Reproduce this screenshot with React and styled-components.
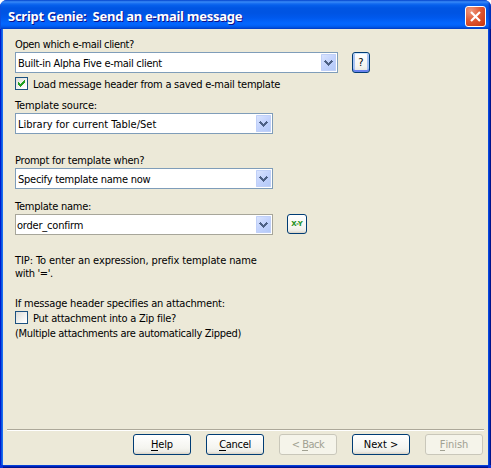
import React from 'react';
import styled, { createGlobalStyle, css } from 'styled-components';

const GlobalStyle = createGlobalStyle`
  * { box-sizing: border-box; }
  body { margin: 0; background: #fff; overflow: hidden; }
`;

const Dialog = styled.div`
  width: 491px;
  height: 468px;
  display: flex;
  flex-direction: column;
  overflow: hidden;
  border-radius: 7px 7px 0 0;
  background: #0831d9;
  font: 11px/13px 'DejaVu Sans Condensed', 'DejaVu Sans', sans-serif;
  color: #000;
`;

const TitleBar = styled.header`
  height: 29px;
  flex: none;
  display: flex;
  align-items: center;
  justify-content: space-between;
  padding: 3px 5px 0 8px;
  box-shadow: inset 1px 0 #0a4fe0, inset -2px 0 2px #0030b8;
  background: linear-gradient(
    #0a54dc 0, #3b8df8 2px, #1f74f2 3px, #0660ec 5px, #0055e3 8px,
    #0054e3 13px, #0059ee 18px, #0366fe 23px, #0264fc 25px, #0058e8 27px, #0144cb 29px
  );
`;

const Title = styled.h1`
  margin: 0;
  font: bold 13px/18px 'Noto Sans', sans-serif;
  letter-spacing: -0.26px;
  white-space: pre;
  color: #fff;
  text-shadow: 1px 1px #0f1089;
`;

const CloseButton = styled.button`
  width: 21px;
  height: 21px;
  padding: 0;
  display: grid;
  place-items: center;
  border: 1px solid #fff;
  border-radius: 3px;
  background: radial-gradient(circle at 25% 20%, #ee9a80, #e05a36 45%, #cf3d16 85%, #b93310);
`;

const Body = styled.main`
  flex: 1;
  min-height: 0;
  display: flex;
  flex-direction: column;
  margin: 0 3px 3px;
  padding-top: 9px;
  background: #ece9d8;
  box-shadow: -1px 0 #1b6bf2, -2px 0 #0855dd, -3px 0 #0019cf,
    1px 0 #0948dc, 2px 0 #0030c0, 3px 0 #00138c,
    0 1px #0441d8, 0 2px #0020b8, 0 3px #00138c;
`;

const Form = styled.div`
  flex: 1;
  display: flex;
  flex-direction: column;
  padding-left: 12px;
`;

const Label = styled.div`
  height: 13px;
  margin-top: ${(p) => p.$gap || 0}px;
  letter-spacing: ${(p) => p.$track}px;
  white-space: nowrap;
`;

const FieldRow = styled.div`
  display: flex;
  align-items: flex-start;
  gap: 14px;
  height: 21px;
  margin-top: 1px;
`;

const Combo = styled.div`
  width: ${(p) => p.$width}px;
  height: 21px;
  display: flex;
  align-items: center;
  justify-content: space-between;
  padding: 0 1px 0 ${(p) => (p.$editable ? 1 : 2)}px;
  border: 1px solid ${(p) => (p.$editable ? '#a7a69a' : '#7f9db9')};
  background: #fff;
  letter-spacing: ${(p) => p.$track}px;
  white-space: nowrap;
`;

const ComboText = styled.span`
  padding-top: 1px;
`;

const ArrowButton = styled.span`
  width: 15px;
  height: 17px;
  display: grid;
  place-items: center;
  border-radius: 1px;
  box-shadow: inset 0 0 0 1px #c0d0f8;
  background: linear-gradient(135deg, #dce6fe, #c3d3fd 50%, #b1c8f7);
`;

const CheckRow = styled.label`
  height: 13px;
  display: flex;
  gap: 5px;
  margin-top: ${(p) => p.$gap}px;
  letter-spacing: ${(p) => p.$track}px;
  white-space: nowrap;
`;

const CheckBox = styled.span`
  width: 13px;
  height: 13px;
  display: grid;
  place-items: center;
  border: 1px solid #1c5180;
  background: linear-gradient(135deg, #dcdcd7, #fff 90%);
`;

const CheckText = styled.span`
  padding-top: 1px;
`;

const frame = css`
  display: flex;
  align-items: center;
  justify-content: center;
  padding: 0;
  border: 1px solid #003c74;
  border-radius: 3px;
  font: inherit;
  color: #000;
  background: linear-gradient(#fff, #f4f4ef 70%, #ecebe5 88%, #d8d1c4);
`;

const HelpButton = styled.button`
  ${frame}
  width: 18px;
  height: 21px;
  box-shadow: inset 0 1px #cee7ff, inset 0 -2px #6982ee, inset 2px 0 #a9c4f4, inset -2px 0 #a9c4f4;
`;

const ExpressionButton = styled.button`
  ${frame}
  width: 20px;
  height: 20px;
  font: bold 7px/8px 'DejaVu Sans', sans-serif;
  letter-spacing: -0.1px;
  color: #229122;
`;

const Divider = styled.hr`
  width: 477px;
  height: 2px;
  flex: none;
  margin: 0 4px 3px;
  border: 0;
  border-top: 1px solid #aca899;
  border-bottom: 1px solid #fff;
`;

const ButtonBar = styled.footer`
  display: flex;
  justify-content: flex-end;
  gap: 15px;
  padding: 0 5px 10px 0;
`;

const PushButton = styled.button`
  ${frame}
  width: 58px;
  height: 21px;
  letter-spacing: ${(p) => p.$track}px;
  ${(p) =>
    p.disabled &&
    css`
      border-color: #c9c7ba;
      background: #f5f4ea;
      color: #a1a192;
    `}
`;

const Mnemonic = styled.span`
  display: inline-block;
  height: 13px;
  border-bottom: 1px solid currentColor;
`;

const Arrow = () => (
  <ArrowButton>
    <svg width="9" height="6" viewBox="0 0 9 6" shapeRendering="crispEdges">
      <path fill="#4d6185" d="M1 0h1v1h1v1h1v1h1V2h1V1h1V0h1v1h1v1H8v1H7v1H6v1H5v1H4V5H3V4H2V3H1V2H0V1h1z" />
    </svg>
  </ArrowButton>
);

const Select = ({ text, width = 258, track, editable }) => (
  <Combo $width={width} $track={track} $editable={editable}>
    <ComboText>{text}</ComboText>
    <Arrow />
  </Combo>
);

export default function App() {
  return (
    <Dialog>
      <GlobalStyle />
      <TitleBar>
        <Title>{'Script Genie:  Send an e-mail message'}</Title>
        <CloseButton aria-label="Close">
          <svg width="13" height="13" viewBox="0 0 13 13">
            <path d="M2 2l9 9M11 2l-9 9" stroke="#fff" strokeWidth="2.2" />
          </svg>
        </CloseButton>
      </TitleBar>
      <Body>
        <Form>
          <Label $track={-0.36}>Open which e-mail client?</Label>
          <FieldRow>
            <Select width={323} track={-0.29} text="Built-in Alpha Five e-mail client" />
            <HelpButton>?</HelpButton>
          </FieldRow>
          <CheckRow $gap={4} $track={-0.25}>
            <CheckBox>
              <svg width="7" height="7" viewBox="0 0 7 7" shapeRendering="crispEdges">
                <path fill="#21a121" d="M0 2h1v1h1v1h1V3h1V2h1V1h1V0h1v3H6v1H5v1H4v1H3v1H2V6H1V5H0z" />
              </svg>
            </CheckBox>
            <CheckText>Load message header from a saved e-mail template</CheckText>
          </CheckRow>
          <Label $gap={9} $track={-0.14}>Template source:</Label>
          <FieldRow>
            <Select track={0} text="Library for current Table/Set" />
          </FieldRow>
          <Label $gap={20} $track={-0.23}>Prompt for template when?</Label>
          <FieldRow>
            <Select track={-0.25} text="Specify template name now" />
          </FieldRow>
          <Label $gap={11} $track={-0.24}>Template name:</Label>
          <FieldRow>
            <Select editable track={-0.2} text="order_confirm" />
            <ExpressionButton>X-Y</ExpressionButton>
          </FieldRow>
          <Label $gap={19} $track={-0.1}>TIP: To enter an expression, prefix template name</Label>
          <Label $track={-0.35}>with '='.</Label>
          <Label $gap={17} $track={-0.19}>If message header specifies an attachment:</Label>
          <CheckRow $gap={1} $track={-0.23}>
            <CheckBox />
            <CheckText>Put attachment into a Zip file?</CheckText>
          </CheckRow>
          <Label $gap={3} $track={-0.3}>(Multiple attachments are automatically Zipped)</Label>
        </Form>
        <Divider />
        <ButtonBar>
          <PushButton $track={-0.2}><Mnemonic>H</Mnemonic>elp</PushButton>
          <PushButton $track={-0.3}><Mnemonic>C</Mnemonic>ancel</PushButton>
          <PushButton disabled $track={-0.5}>&lt;&nbsp;<Mnemonic>B</Mnemonic>ack</PushButton>
          <PushButton $track={0}>Next &gt;</PushButton>
          <PushButton disabled $track={-0.1}><Mnemonic>F</Mnemonic>inish</PushButton>
        </ButtonBar>
      </Body>
    </Dialog>
  );
}
